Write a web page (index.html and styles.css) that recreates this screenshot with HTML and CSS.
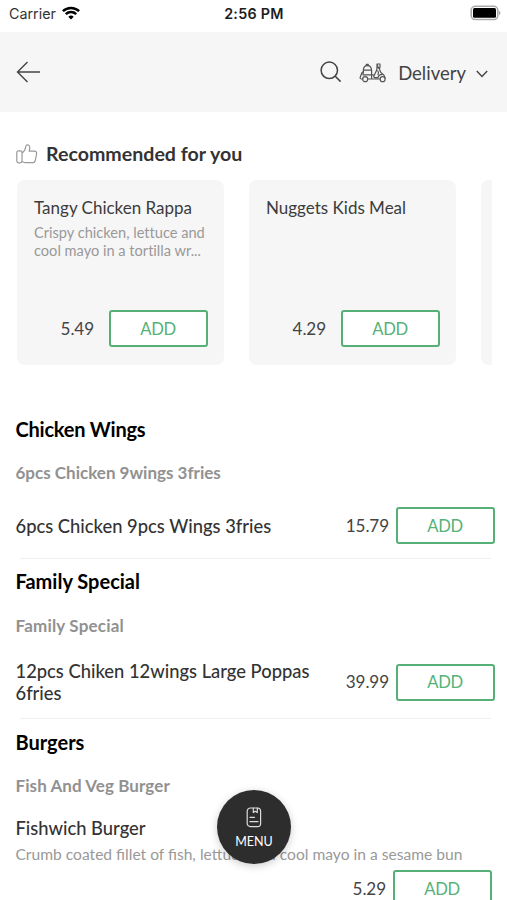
FILE: index.html
```html
<!DOCTYPE html>
<html lang="en">
<head>
<meta charset="utf-8">
<title>Menu</title>
<link rel="stylesheet" href="styles.css">
</head>
<body>
<div class="screen">
  <div class="status">
    <div class="carrier"><span>Carrier</span>
      <svg width="18" height="14" viewBox="0 0 18 14" fill="none" stroke="#000" stroke-width="2.5"><path d="M.9 5.2a11.6 11.6 0 0 1 16.2 0M3.8 8.2a7.4 7.4 0 0 1 10.4 0"/><path d="M9 13.6 6.3 10.8a3.8 3.8 0 0 1 5.4 0z" fill="#000" stroke="none"/></svg>
    </div>
    <div class="time">2:56 PM</div>
    <svg class="battery" width="31" height="16" viewBox="0 0 31 16"><rect x="1.200" y="1.300" width="26.600" height="13.200" rx="4" fill="#fff" stroke="#aaa" stroke-width="1.600"/><rect x="3" y="3" width="23" height="9.800" rx="1.500" fill="#000"/><path d="M29 5.400q3 2.400 0 4.800z" fill="#aaa"/></svg>
  </div>
  <header class="topbar">
    <svg class="back" width="26" height="24" viewBox="0 0 26 24" fill="none" stroke="#444" stroke-width="1.4"><path d="M24 12H1.5M11.5 2 1.5 12l10 10"/></svg>
    <svg class="search" width="22" height="22" viewBox="0 0 22 22" fill="none" stroke="#444" stroke-width="1.5"><circle cx="9.3" cy="9.3" r="8.2"/><path d="m15 15 5.6 5.6"/></svg>
    <svg class="scooter" width="28" height="21" viewBox="0 0 28 21" fill="none" stroke="#555" stroke-width="1.200" stroke-linejoin="round" stroke-linecap="round"><path d="M4.300 8.200C4.500 5 6.200 3.600 8.300 3.600s4.100 1.400 4.300 4.600zM7.300 3.600V2.400h2v1.200M4.600 8.200 4 12.800M12.600 8.200v8.600M4 12.800h8.600M4.300 9.500 2.800 11 1.200 15.300c-.3 1 .2 1.700 1.200 1.700h1.100M8.900 17h12.300M12.600 12.800h1.700M18 2h3v3.400l-1.600.8zM18 2v4.200l-.6 2.600-2.400 5c-.6 1.200 0 1.900 1.100 1.900h2.900M20.200 6l1.200 3.700c.3 1 .9 1.400 1.700 1.900 1.600 1 2.700 2.400 3 4.400M18.800 8.800c.8 1.300 1 2.600.2 3.900M19 15.700c.6-2.300 2.300-3.500 4.800-3.300"/><circle cx="6.200" cy="17.200" r="2.500"/><circle cx="23.600" cy="17.200" r="2.500"/></svg>
    <span class="mode">Delivery</span>
    <svg class="chev" width="12" height="8" viewBox="0 0 12 8" fill="none" stroke="#444" stroke-width="1.4"><path d="m.8 1 5.200 5.400L11.200 1"/></svg>
  </header>
  <section class="reco">
    <h2 class="reco-title">
      <svg width="22" height="20" viewBox="0 0 22 20" fill="none" stroke="#999" stroke-width="1.200" stroke-linejoin="round"><rect x=".8" y="6.800" width="5.200" height="12" rx="1.800"/><path d="M6 9c2.400-1.400 3.400-3.400 3.700-6C9.900 1.200 10.700.7 11.600.8c1.800.2 2.400 1.800 2.200 3.500-.1 1.200-.4 1.900-.7 2.800h5.100c1.900 0 2.700 1.300 2.400 2.900l-1.300 6.300c-.4 1.700-1.300 2.400-2.900 2.400H9.700c-1.500 0-2.300-.5-3.700-1.200"/></svg>
      <span>Recommended for you</span>
    </h2>
    <div class="cards">
      <article class="card">
        <h3 class="card-name">Tangy Chicken Rappa</h3>
        <p class="card-desc">Crispy chicken, lettuce and<br>cool mayo in a tortilla wr...</p>
        <div class="card-buy"><span class="price">5.49</span><button class="add">ADD</button></div>
      </article>
      <article class="card">
        <h3 class="card-name">Nuggets Kids Meal</h3>
        <div class="card-buy"><span class="price">4.29</span><button class="add">ADD</button></div>
      </article>
      <article class="card"></article>
    </div>
  </section>
  <main class="menu">
    <section class="group">
      <h2 class="group-title wings">Chicken Wings</h2>
      <h3 class="group-sub">6pcs Chicken 9wings 3fries</h3>
      <div class="item"><span class="name">6pcs Chicken 9pcs Wings 3fries</span><span class="price">15.79</span><button class="add">ADD</button></div>
    </section>
    <section class="group">
      <h2 class="group-title">Family Special</h2>
      <h3 class="group-sub family">Family Special</h3>
      <div class="item tall"><span class="name">12pcs Chiken 12wings Large Poppas 6fries</span><span class="price">39.99</span><button class="add">ADD</button></div>
    </section>
    <section class="group last">
      <h2 class="group-title">Burgers</h2>
      <h3 class="group-sub burger">Fish And Veg Burger</h3>
      <div class="name solo">Fishwich Burger</div>
      <p class="desc">Crumb coated fillet of fish, lettuce and cool mayo in a sesame bun</p>
      <div class="buy"><span class="price">5.29</span><button class="add">ADD</button></div>
    </section>
  </main>
  <div class="fab">
    <svg width="16" height="21" viewBox="0 0 16 21" fill="none" stroke="#ddd" stroke-width="1.200" stroke-linecap="round" stroke-linejoin="round"><rect x="1.200" y="1" width="13.400" height="18.600" rx="3.200"/><path d="M7.300 1v4.600l2-1.300 2 1.300V1M4 10.300h4.500M4 14.700h8"/></svg>
    <span>MENU</span>
  </div>
</div>
</body>
</html>
```
FILE: styles.css
```css
* { box-sizing: border-box; }
body { margin: 0; background: #fff; font-family: Lato, "Liberation Sans", sans-serif; color: #3c3c3c; }
h2, h3, p { margin: 0; font-weight: 400; }
svg { display: block; flex: none; }
.screen { position: relative; width: 507px; height: 900px; overflow: hidden; }
.status { height: 32px; display: grid; grid-template-columns: 1fr auto 1fr; align-items: start; padding: 5px 7px 0 9px; font-family: Inter, sans-serif; font-size: 14.3px; line-height: 18px; color: #333; }
.carrier { display: flex; gap: 6px; }
.carrier svg { margin-top: 1px; }
.time { margin-right: 1px; font-weight: 600; color: #1c1c1c; letter-spacing: .3px; }
.battery { justify-self: end; margin-right: -1px; }
.topbar { height: 80px; background: #f6f6f6; display: flex; align-items: center; padding: 0 19px 0 16px; }
.search { margin-left: auto; }
.scooter { margin-left: 17px; }
.mode { margin: 1px 10px 0 11px; font-size: 18.5px; line-height: 24px; color: #444; }
.chev { margin-top: 3px; }
.reco { padding: 29px 15px 0 16px; height: 291px; }
.reco-title { display: flex; align-items: center; gap: 8px; height: 25px; margin-bottom: 14px; font-size: 19.6px; font-weight: 700; line-height: 25px; color: #333; }
.cards { display: flex; gap: 25px; margin-left: 1px; overflow: hidden; }
.card { flex: none; width: 207px; height: 185px; border-radius: 8px; background: #f6f6f6; padding: 16px 16px 18px 17px; display: flex; flex-direction: column; white-space: nowrap; }
.card-name { font-size: 17px; line-height: 24px; }
.card-desc { margin-top: 4px; font-size: 14.6px; line-height: 17.5px; color: #999; font-variant-ligatures: none; }
.card-buy { display: flex; align-items: center; justify-content: flex-end; gap: 15px; margin-top: auto; }
.price { font-size: 17.1px; line-height: 22px; letter-spacing: -.1px; color: #444; }
.add { flex: none; width: 99px; height: 37px; padding: 0 1px 0 0; border: 2px solid #56af76; border-radius: 3px; background: #fff; color: #56b278; font: 400 16.6px/20px Lato, sans-serif; letter-spacing: -.35px; }
.menu { padding: 0 12px 0 15.5px; }
.group { position: relative; height: 156px; padding-top: 14px; }
.group + .group { height: 160px; padding-top: 10px; }
.group::after { content: ""; position: absolute; left: 4px; right: 4px; bottom: 0; height: 1px; background: #f0f0f0; }
.group + .group.last { height: 181px; padding-top: 11px; }
.group.last::after { display: none; }
.group-title { height: 24px; font-size: 20px; font-weight: 700; line-height: 24px; color: #000; }
.wings { letter-spacing: -.22px; }
.group-sub { margin-top: 20px; font-size: 17px; font-weight: 700; line-height: 24px; color: #919191; }
.group:nth-child(2) .group-sub { margin-top: 21px; }
.family { letter-spacing: .18px; }
.burger { letter-spacing: .08px; }
.item { display: flex; align-items: center; height: 37px; margin-top: 22px; }
.group .tall { height: 44px; margin-top: 22px; }
.name { flex: none; width: 310px; font-size: 18.35px; font-weight: 500; line-height: 22px; color: #333; }
.item .price { margin-left: auto; margin-right: 7px; }
.solo { margin-top: 19px; }
.desc { margin-top: 4px; font-size: 15.6px; line-height: 22px; color: #999; white-space: nowrap; }
.buy { display: flex; align-items: center; justify-content: flex-end; gap: 7px; margin: 5px 3px 0 0; }
.fab { position: absolute; left: 217px; top: 790px; width: 74px; height: 74px; border-radius: 50%; background: #2d2d2d; box-shadow: 0 2px 9px rgba(0,0,0,.2); display: flex; flex-direction: column; align-items: center; padding-top: 17px; color: #fff; }
.fab span { margin-top: 6px; font-size: 12.5px; line-height: 16px; }
```
